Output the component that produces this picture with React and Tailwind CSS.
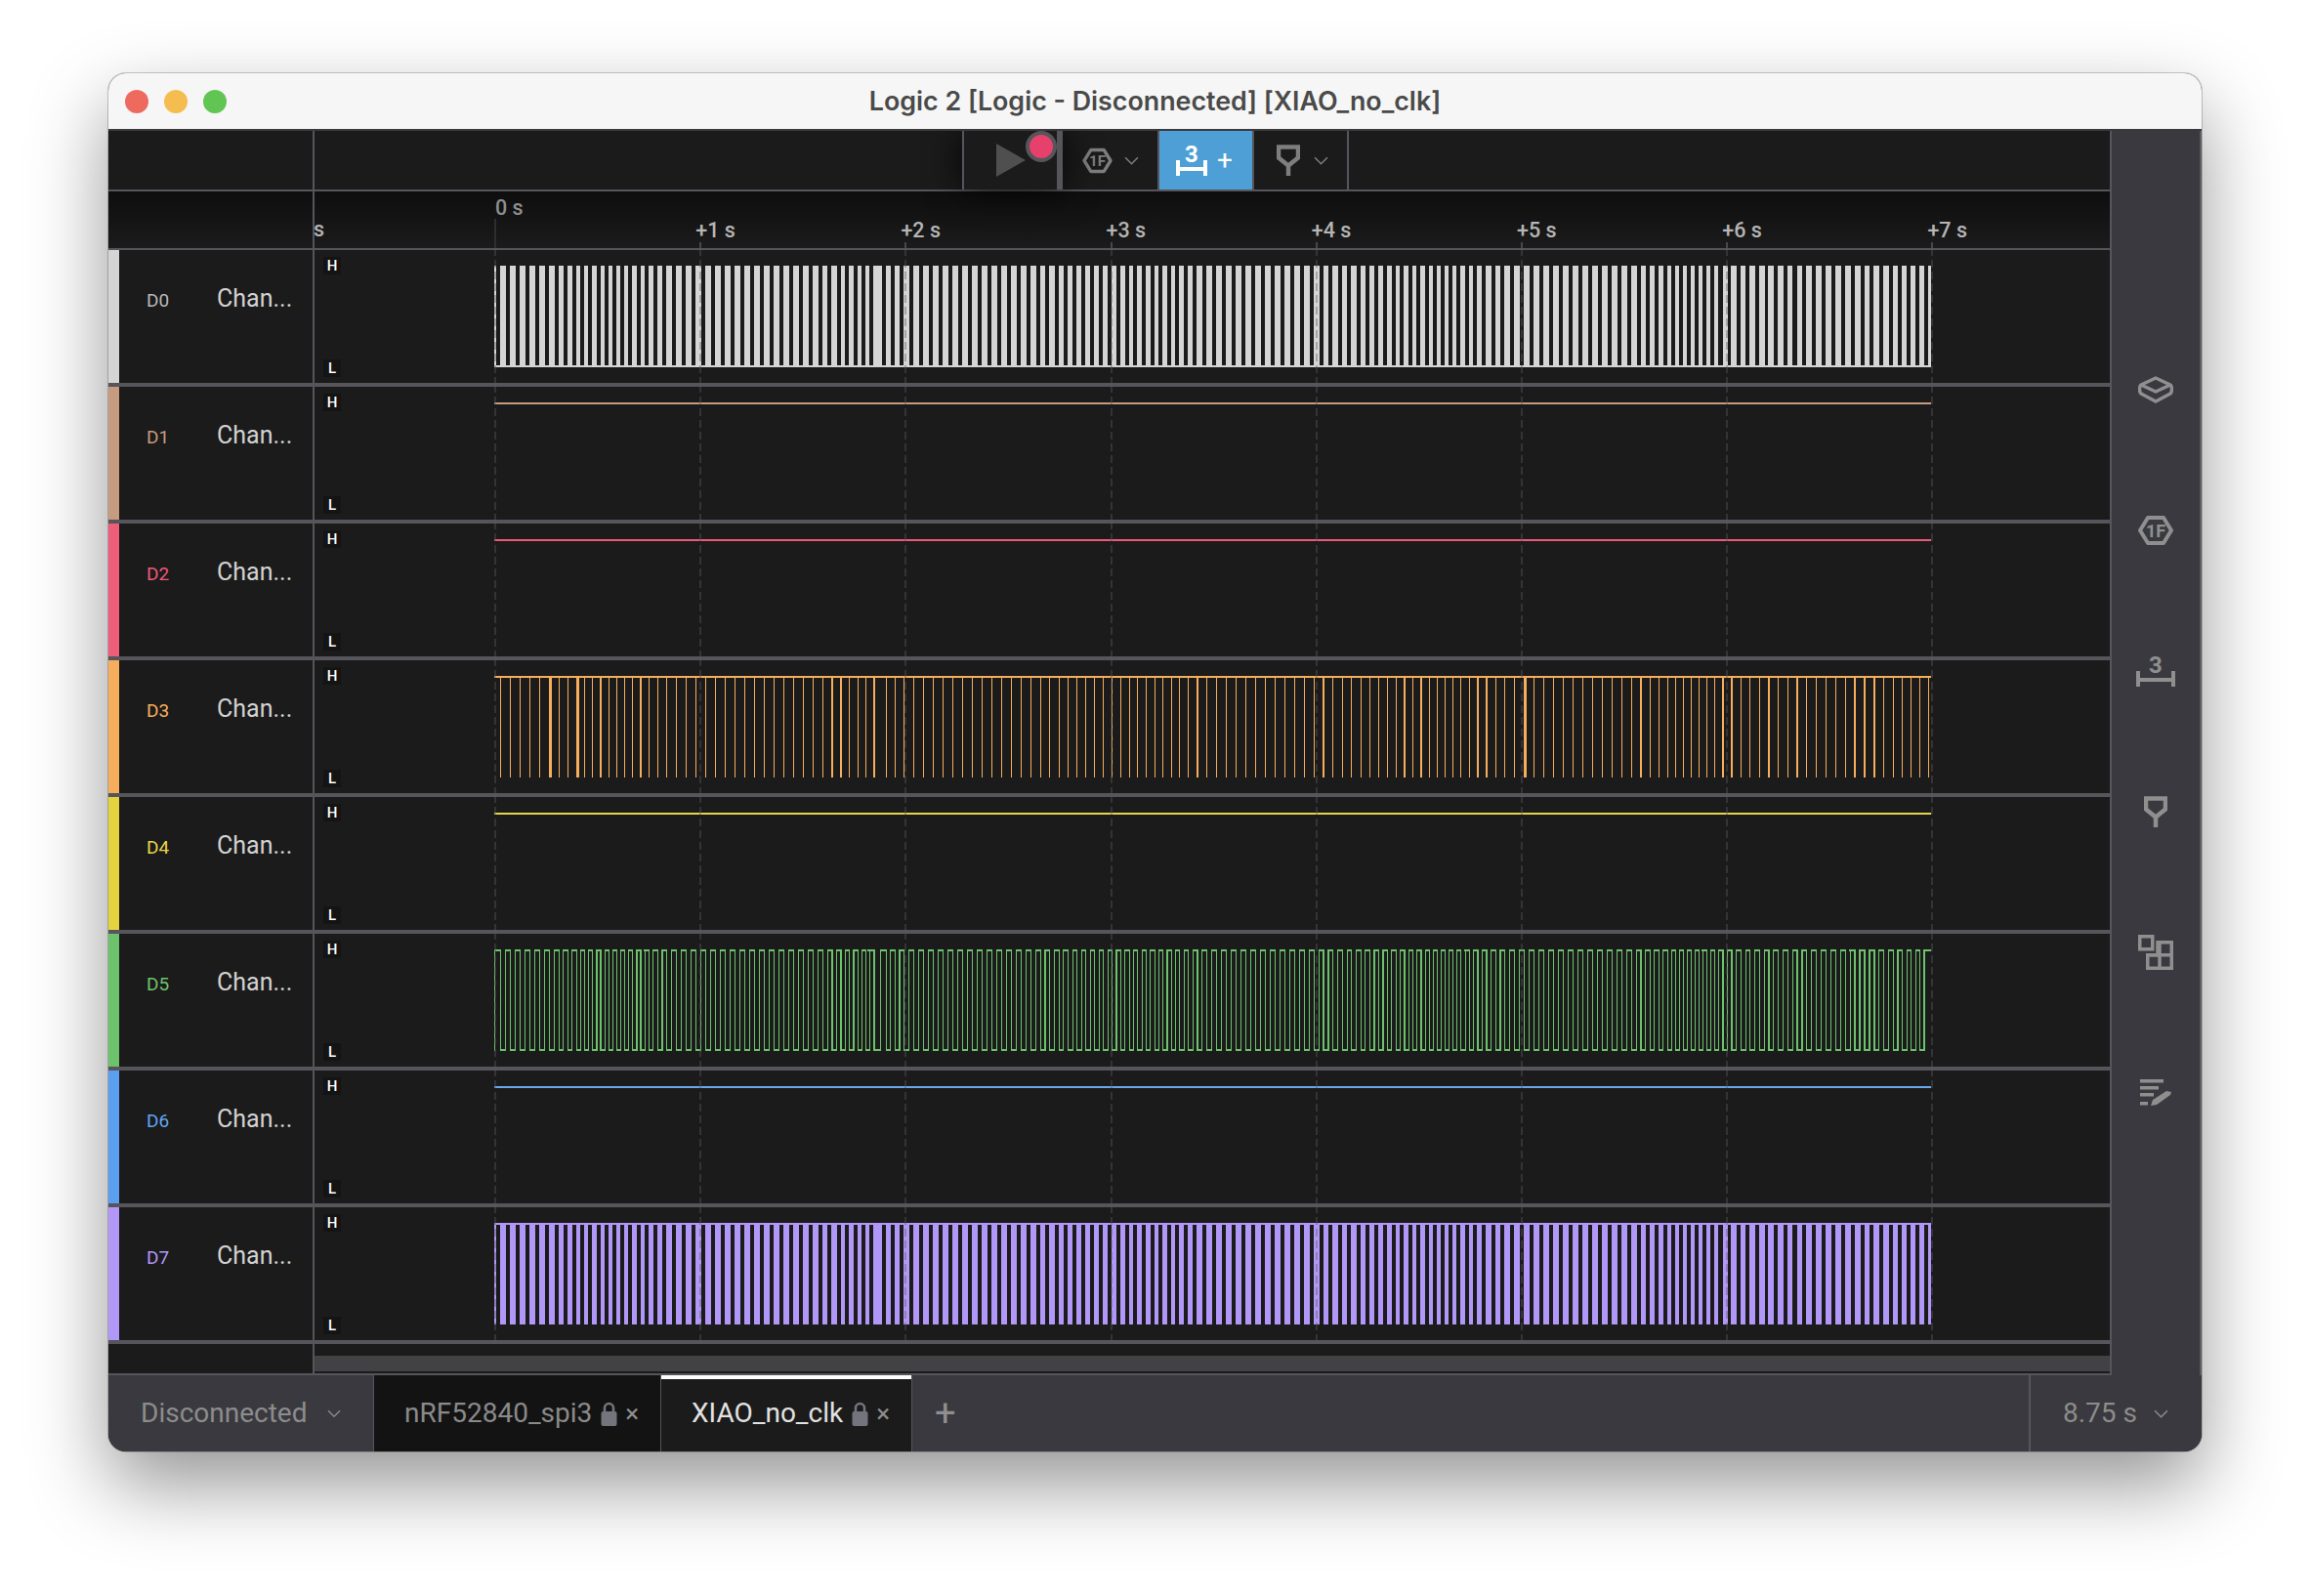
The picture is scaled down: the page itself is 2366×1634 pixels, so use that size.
const SIGNAL_START = 184;
const SIGNAL_END = 1655;
const SECOND = 210.2;
const TICKS = [0, 1, 2, 3, 4, 5, 6, 7];

// signal spacing drifts along the capture: [x, period]
const PERIOD_POINTS = [
  [0, 10], [46, 10], [90, 8.2], [150, 8.2], [165, 9.5], [185, 10], [325, 10], [365, 8.3], [395, 8.5],
  [420, 10], [530, 10], [600, 9], [690, 8.5], [735, 10], [830, 10], [900, 9], [975, 8], [1040, 10],
  [1150, 10], [1200, 8.5], [1225, 7.6], [1270, 9.5], [1400, 10], [1471, 8.5],
];

function periodAt(x) {
  for (let i = 1; i < PERIOD_POINTS.length; i++) {
    const [x0, p0] = PERIOD_POINTS[i - 1];
    const [x1, p1] = PERIOD_POINTS[i];
    if (x <= x1) return p0 + ((p1 - p0) * (x - x0)) / (x1 - x0);
  }
  return 10;
}

function buildEdges() {
  const edges = [];
  let x = 6;
  let gapDone = false;
  while (x < 1471) {
    let period = periodAt(x);
    if (!gapDone && x > 380) {
      period += 4;
      gapDone = true;
    }
    edges.push({ x: SIGNAL_START + x, period });
    x += period;
  }
  return edges;
}

const EDGES = buildEdges();

function barsPath() {
  let d = `M${SIGNAL_START} 16h2v104h-2z`;
  EDGES.forEach((edge) => {
    const w = Math.min(edge.period - 4, SIGNAL_END - edge.x);
    if (w > 0) d += `M${edge.x.toFixed(1)} 16h${w.toFixed(1)}v104h-${w.toFixed(1)}z`;
  });
  return d;
}

function isThick(edge, index) {
  return index === 5 || index === 8 || Math.abs(edge.x - SIGNAL_START - 1049) < 5;
}

const CHANNELS = [
  { id: "D0", color: "#d5d5d5", labelClass: "text-[#b8b8b8]", barClass: "bg-[#d5d5d5]", wave: "barsLow" },
  { id: "D1", color: "#c69b7f", labelClass: "text-[#c69b7f]", barClass: "bg-[#c69b7f]", wave: "flat" },
  { id: "D2", color: "#f0587a", labelClass: "text-[#f0587a]", barClass: "bg-[#ef5e78]", wave: "flat" },
  { id: "D3", color: "#f7ae5c", labelClass: "text-[#f7ae5c]", barClass: "bg-[#f7ae5c]", wave: "pulses" },
  { id: "D4", color: "#e8d64a", labelClass: "text-[#e8d64a]", barClass: "bg-[#e4d33f]", wave: "flat" },
  { id: "D5", color: "#6cc36c", labelClass: "text-[#6cc36c]", barClass: "bg-[#6cc36c]", wave: "square" },
  { id: "D6", color: "#69a8ec", labelClass: "text-[#5fa4f2]", barClass: "bg-[#5b9ff0]", wave: "flat" },
  { id: "D7", color: "#b197f7", labelClass: "text-[#b197f7]", barClass: "bg-[#b197f7]", wave: "barsHigh" },
];

function SquareWave({ color }) {
  return (
    <g fill={color}>
      {EDGES.map((edge, i) => {
        const half = edge.period / 2;
        const prevX = i === 0 ? SIGNAL_START : edge.x - half;
        if (edge.x + half > SIGNAL_END) {
          return <rect key={i} x={prevX} y="16" width={SIGNAL_END - prevX} height="2" />;
        }
        return (
          <g key={i}>
            <rect x={prevX} y="16" width={edge.x - prevX} height="2" />
            <rect x={edge.x} y="16" width="1.2" height="104" />
            <rect x={edge.x} y="118" width={half} height="2" />
            <rect x={edge.x + half} y="16" width="1.2" height="104" />
          </g>
        );
      })}
      <rect x={SIGNAL_START} y="16" width="1.2" height="104" />
    </g>
  );
}

function Wave({ kind, color }) {
  const width = SIGNAL_END - SIGNAL_START;
  if (kind === "flat") return <rect x={SIGNAL_START} y="16" width={width} height="2" fill={color} />;
  if (kind === "square") return <SquareWave color={color} />;
  if (kind === "pulses") {
    return (
      <g fill={color}>
        <rect x={SIGNAL_START} y="16" width={width} height="2" />
        {EDGES.map((edge, i) => (
          <rect key={i} x={edge.x} y="16" width={isThick(edge, i) ? 3 : 1.2} height="104" />
        ))}
      </g>
    );
  }
  return (
    <g fill={color}>
      <path d={barsPath()} />
      <rect x={SIGNAL_START} y={kind === "barsLow" ? 118 : 16} width={width} height="2" />
    </g>
  );
}

function SignalTrack({ channel }) {
  return (
    <div className="relative min-w-0 flex-1">
      <svg width="1838" height="136" className="block overflow-visible" shapeRendering="crispEdges">
        <Wave kind={channel.wave} color={channel.color} />
        {TICKS.map((t) => (
          <line
            key={t}
            x1={SIGNAL_START + t * SECOND + 1}
            x2={SIGNAL_START + t * SECOND + 1}
            y1="-2"
            y2="140"
            stroke="#5a5a60"
            strokeOpacity="0.4"
            strokeWidth="2"
            strokeDasharray="8 4"
          />
        ))}
      </svg>
      <span className="absolute left-[9px] top-[7px] w-[18px] bg-[#141414] text-center text-[15px] font-medium leading-[18px] text-white">H</span>
      <span className="absolute left-[9px] top-[112px] w-[18px] bg-[#141414] text-center text-[15px] font-medium leading-[18px] text-white">L</span>
    </div>
  );
}

function ChannelRow({ channel }) {
  return (
    <div className="flex h-[140px] border-b-4 border-[#55555b]">
      <div className={`w-[11px] shrink-0 ${channel.barClass}`} />
      <div className="flex w-[198px] shrink-0 items-start">
        <span className={`mt-[40px] w-[100px] pl-[28px] text-[19px] leading-6 ${channel.labelClass}`}>{channel.id}</span>
        <span className="mt-[34px] text-[25px] leading-8 text-[#d2d2d2]">Chan...</span>
      </div>
      <div className="w-[2px] shrink-0 bg-[#55555b]" />
      <SignalTrack channel={channel} />
    </div>
  );
}

function Chevron({ size = 14, className = "" }) {
  return (
    <svg width={size} height={size * 0.6} viewBox="0 0 14 8" className={className} fill="none" stroke="currentColor" strokeWidth="1.4">
      <path d="M1 1l6 6 6-6" />
    </svg>
  );
}

function HexIcon({ width = 36, height = 32 }) {
  return (
    <svg width={width} height={height} viewBox="0 0 36 32" fill="none">
      <path d="M10 3h16l8 13-8 13H10L2 16z" stroke="currentColor" strokeWidth="4" strokeLinejoin="round" />
      <text x="18" y="22.500" textAnchor="middle" fontFamily="Roboto, sans-serif" fontSize="18" fontWeight="700" fill="currentColor">1F</text>
    </svg>
  );
}

function MeasureIcon({ width = 40 }) {
  return (
    <svg width={width} height="38" viewBox={`0 -6 ${width} 38`} className="-mt-[6px]" fill="currentColor">
      <rect x="0" y="16" width="4" height="16" />
      <rect x={width - 4} y="16" width="4" height="16" />
      <rect x="0" y="23" width={width} height="4" />
      <text x={width / 2} y="18" textAnchor="middle" fontFamily="Roboto, sans-serif" fontSize="24" fontWeight="700">3</text>
    </svg>
  );
}

function TriggerIcon() {
  return (
    <svg width="24" height="32" viewBox="0 0 24 32" fill="none" stroke="currentColor" strokeWidth="4.500">
      <path d="M2 2.500h20v11l-10 8-10-8z" />
      <path d="M12 20v12" />
    </svg>
  );
}

function LayersIcon() {
  return (
    <svg width="36" height="28" viewBox="0 0 36 28" fill="none" stroke="currentColor" strokeWidth="3.500" strokeLinejoin="round">
      <path d="M18 2L33 9 18 16 3 9z" />
      <path d="M3 9c-2 2-2 7 0 9l15 8 15-8c2-2 2-7 0-9" />
    </svg>
  );
}

function LayoutIcon() {
  return (
    <svg width="36" height="36" viewBox="0 0 36 36" fill="none" stroke="currentColor" strokeWidth="3.500">
      <rect x="1.750" y="1.750" width="13" height="13" />
      <path d="M20 7.750h14.250v26.500h-24.500V20.750H20z" />
      <path d="M9.750 20.750h24.500M22 7.750v26.500" />
    </svg>
  );
}

function NotesIcon() {
  return (
    <svg width="32" height="28" viewBox="0 0 32 28" fill="currentColor">
      <rect x="0" y="0" width="24" height="3.500" />
      <rect x="0" y="7" width="19" height="3.500" />
      <rect x="0" y="14" width="14" height="3.500" />
      <rect x="0" y="23" width="8" height="3.500" />
      <path d="M11 27l2-6 14-9 5 1-1 3-14 10z" />
    </svg>
  );
}

function LockIcon() {
  return (
    <svg width="17" height="25" viewBox="0 0 17 25">
      <path d="M4 11V6.500a4.500 4.500 0 0 1 9 0V11" fill="none" stroke="#74747e" strokeWidth="2.600" />
      <rect x="0.500" y="10" width="16" height="15" rx="2" fill="#74747e" />
    </svg>
  );
}

function FileTab({ name, active, widthClass }) {
  return (
    <div className={`flex h-full items-center border-r border-[#55555b] ${widthClass} ${active ? "bg-[#1b1b1b] text-[#e2e2e2]" : "bg-[#131313] text-[#8a8a8a]"} relative pl-[31px]`}>
      {active && <div className="absolute inset-x-0 top-0 h-[4px] bg-white" />}
      <span className="text-[28px] font-normal leading-8">{name}</span>
      <span className="ml-[9px]"><LockIcon /></span>
      <span className="ml-[8px] text-[26px] font-normal leading-8 text-[#8f8f8f]">×</span>
    </div>
  );
}

export default function App() {
  return (
    <div className="h-[1634px] w-[2366px] overflow-hidden bg-white pl-[111px] pt-[75px] font-['Roboto',sans-serif]">
      <div className="flex h-[1411px] w-[2143px] flex-col overflow-hidden rounded-[18px] bg-[#1b1b1b] shadow-[0_0_0_1px_rgba(0,0,0,0.2),0_34px_80px_rgba(0,0,0,0.42)]">
        <div className="relative z-20 grid h-[59px] shrink-0 grid-cols-[1fr_auto_1fr] items-center border-b-2 border-[#3a3a3c] bg-[#f6f6f6]">
          <div className="flex gap-[16px] pl-[17px]">
            <span className="h-6 w-6 rounded-full bg-[#ee6a5f]" />
            <span className="h-6 w-6 rounded-full bg-[#f5bd4f]" />
            <span className="h-6 w-6 rounded-full bg-[#61c554]" />
          </div>
          <div className="font-['Inter',sans-serif] text-[26.800px] font-semibold text-[#4a4a4a]">Logic 2 [Logic - Disconnected] [XIAO_no_clk]</div>
          <div />
        </div>

        <div className="flex min-h-0 flex-1">
          <div className="flex w-[2049px] shrink-0 flex-col">
            <div className="flex h-[62px] shrink-0 border-b-2 border-[#55555b]">
              <div className="w-[209px] shrink-0" />
              <div className="w-[2px] shrink-0 bg-[#55555b]" />
              <div className="ml-[663px] flex h-full">
                <div className="relative z-10 h-full w-[103px] border-x-[2px] border-r-[6px] border-l-[#55555b] border-r-[#55555b] bg-[#1b1b1b] shadow-[0_0_36px_rgba(0,0,0,0.85)]">
                  <svg width="32" height="36" viewBox="0 0 32 36" className="ml-[33px] mt-[12px]">
                    <path d="M0 1v34l30-17z" fill="#4f4f4f" />
                  </svg>
                  <span className="absolute right-0 top-0 h-[32px] w-[32px] rounded-full border-[4px] border-[#55555b] bg-[#e8406c]" />
                </div>
                <div className="flex h-full w-[97px] items-center gap-[12px] pl-[20px] text-[#7e7e7e]">
                  <HexIcon width={31} height={27} />
                  <Chevron size={15} />
                </div>
                <div className="flex h-full w-[97px] items-center gap-[10px] border-l-2 border-[#55555b] bg-[#4e9fd5] pl-[17px] text-white">
                  <MeasureIcon width={32} />
                  <span className="text-[28px] font-normal leading-none">+</span>
                </div>
                <div className="flex h-full w-[99px] items-center gap-[14px] border-x-2 border-[#55555b] pl-[23px] text-[#7e7e7e]">
                  <TriggerIcon />
                  <Chevron size={15} />
                </div>
              </div>
            </div>

            <div className="flex h-[60px] shrink-0 border-b-2 border-[#55555b] bg-gradient-to-b from-[#0e0e0e] to-[#1b1b1b]">
              <div className="w-[209px] shrink-0" />
              <div className="w-[2px] shrink-0 bg-[#55555b]" />
              <div className="relative min-w-0 flex-1">
                <span className="absolute left-[-1px] top-[27px] text-[21.500px] font-medium leading-6 text-[#b5b5b5]">s</span>
                <span className="absolute left-[185px] top-[5px] text-[21.500px] font-medium leading-6 text-[#8e8e8e]">0 s</span>
                <span className="absolute left-[184px] top-[28px] h-[30px] w-[2px] bg-[#2e2e32]" />
                {TICKS.slice(1).map((t) => (
                  <div key={t}>
                    <span className="absolute top-[28px] whitespace-nowrap text-[21.500px] font-medium leading-6 text-[#b5b5b5]" style={{ left: SIGNAL_START + t * SECOND - 4 }}>+{t} s</span>
                    <span className="absolute top-[52px] h-[6px] w-[2px] bg-[#47474d]" style={{ left: SIGNAL_START + t * SECOND }} />
                  </div>
                ))}
              </div>
            </div>

            {CHANNELS.map((channel) => (
              <ChannelRow key={channel.id} channel={channel} />
            ))}

            <div className="flex h-[32px] shrink-0 border-b-2 border-[#55555b]">
              <div className="w-[209px] shrink-0 bg-[#1b1b1b]" />
              <div className="w-[2px] shrink-0 bg-[#55555b]" />
              <div className="flex-1 pt-[12px]">
                <div className="h-[16px] bg-[#424244]" />
              </div>
            </div>
          </div>

          <div className="flex flex-1 flex-col items-center border-x-2 border-[#55555b] border-r-[#5c5c62] bg-[#3a393f] pt-[193px] text-[#8f8f8f]">
            {[<LayersIcon />, <HexIcon />, <MeasureIcon />, <TriggerIcon />, <LayoutIcon />, <NotesIcon />].map((icon, i) => (
              <div key={i} className="flex h-[144px] shrink-0 items-center justify-center">{icon}</div>
            ))}
          </div>
        </div>

        <div className="flex h-[78px] shrink-0 items-center bg-[#3a393f] text-[#8c8c8c]">
          <div className="flex h-full w-[272px] items-center border-r border-[#55555b] pl-[33px]">
            <span className="text-[28px] font-normal leading-8">Disconnected</span>
            <Chevron size={14} className="ml-[20px]" />
          </div>
          <FileTab name="nRF52840_spi3" widthClass="w-[294px]" />
          <FileTab name="XIAO_no_clk" active widthClass="w-[257px]" />
          <span className="ml-[23px] text-[38px] font-normal leading-none text-[#8f8f8f]">+</span>
          <div className="ml-auto flex h-full w-[177px] items-center border-l-2 border-[#55555b] pl-[33px]">
            <span className="text-[28px] font-normal leading-8">8.75 s</span>
            <Chevron size={15} className="ml-[17px]" />
          </div>
        </div>
      </div>
    </div>
  );
}
